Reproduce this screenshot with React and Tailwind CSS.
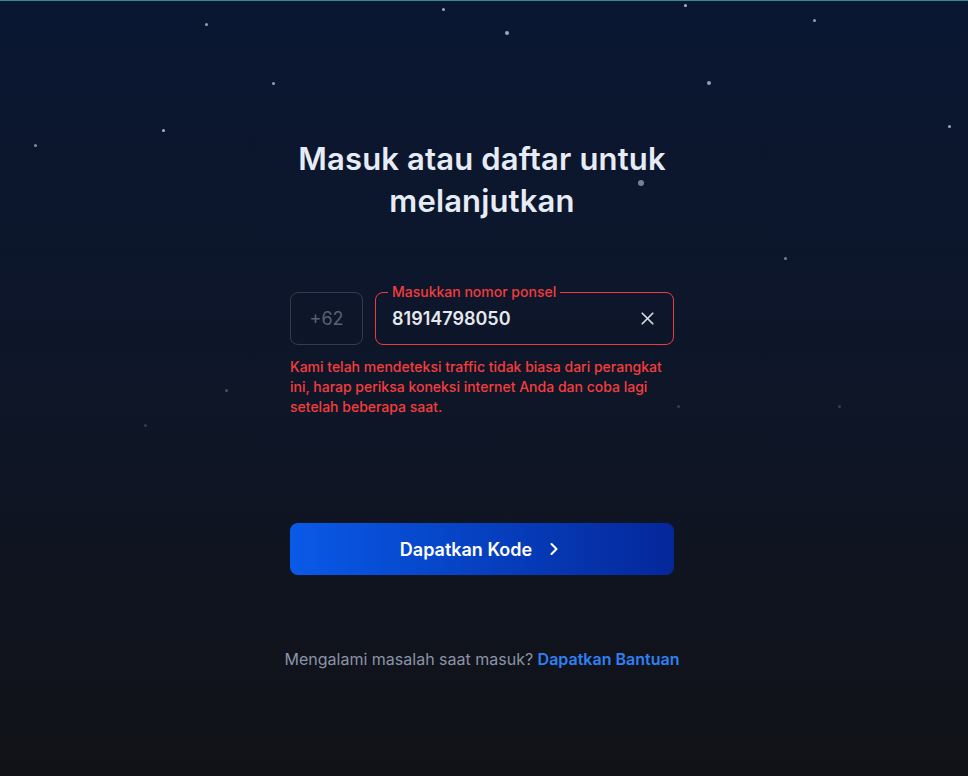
import { useState } from "react";
import { X, ChevronRight } from "lucide-react";

// decorative star dots: [x, y, size, opacity]
const stars = [
  [205, 22, 3, 0.7],
  [442, 7, 3, 0.75],
  [505, 30, 4, 0.75],
  [684, 3, 3, 0.8],
  [813, 18, 3, 0.7],
  [272, 81, 3, 0.7],
  [707, 80, 4, 0.7],
  [162, 128, 3, 0.8],
  [34, 143, 3, 0.6],
  [948, 124, 3, 0.75],
  [638, 179, 6, 0.55],
  [784, 256, 3, 0.55],
  [225, 388, 3, 0.3],
  [677, 404, 3, 0.2],
  [838, 404, 3, 0.2],
  [144, 423, 3, 0.2],
];

const App = () => {
  const [phone, setPhone] = useState("81914798050");

  return (
    <div
      className="relative h-screen w-full overflow-hidden bg-linear-to-b from-[#0a1732] via-[#0e1628] to-[#111217] border-t border-[#3a8c8f]"
      style={{ fontFamily: "Inter, 'Noto Sans', sans-serif" }}
    >
      {/* Stars */}
      {stars.map(([x, y, s, o], i) => (
        <span
          key={i}
          className="absolute rounded-full bg-[#cfd8e6] blur-[0.6px]"
          style={{ left: x, top: y, width: s, height: s, opacity: o }}
        />
      ))}

      <div className="relative mx-auto flex w-[388px] flex-col pr-1 pt-[137px]">
        {/* Title */}
        <h1 className="-mx-4 text-center text-[31px] font-semibold leading-[42px] tracking-[0.15px] text-[#e6ecf6]">
          Masuk atau daftar untuk
          <br />
          melanjutkan
        </h1>

        {/* Phone row */}
        <div className="mt-[62px] flex items-end gap-3">
          <div className="flex h-[53px] w-[73px] shrink-0 items-center justify-center rounded-lg border border-[#343b4a] text-[18px] text-[#586172]">
            +62
          </div>
          <fieldset className="h-[61px] min-w-0 flex-1 rounded-lg border border-[#ef3b3b] pl-4 pr-[15px] pb-2">
            <legend className="ml-[-4px] px-1 text-[14px] font-medium leading-4 text-[#f33c3c]">
              Masukkan nomor ponsel
            </legend>
            <div className="flex h-full items-center">
              <input
                value={phone}
                onChange={(e) => setPhone(e.target.value)}
                className="min-w-0 flex-1 bg-transparent text-[18px] font-semibold text-[#e5e8ee] outline-none"
              />
              <button onClick={() => setPhone("")} className="ml-2 text-[#d4d8e0]">
                <X size={21} strokeWidth={2} />
              </button>
            </div>
          </fieldset>
        </div>

        {/* Error */}
        <p className="mt-3 text-[14px] font-medium leading-5 text-[#f53d3d]">
          Kami telah mendeteksi traffic tidak biasa dari perangkat ini, harap periksa koneksi
          internet Anda dan coba lagi setelah beberapa saat.
        </p>

        {/* Submit */}
        <button className="mt-[106px] flex h-[52px] w-full items-center justify-center gap-3 rounded-lg bg-linear-to-r from-[#0a5ae8] to-[#05279a] text-[18px] font-semibold text-white">
          Dapatkan Kode
          <ChevronRight size={20} strokeWidth={2.5} />
        </button>

        {/* Help */}
        <p className="-mx-6 mt-[72px] whitespace-nowrap text-center text-[16px] leading-6 text-[#8b94a6]">
          Mengalami masalah saat masuk?{" "}
          <a href="#" className="font-semibold text-[#2f80f3]">
            Dapatkan Bantuan
          </a>
        </p>
      </div>
    </div>
  );
};

export default App;
